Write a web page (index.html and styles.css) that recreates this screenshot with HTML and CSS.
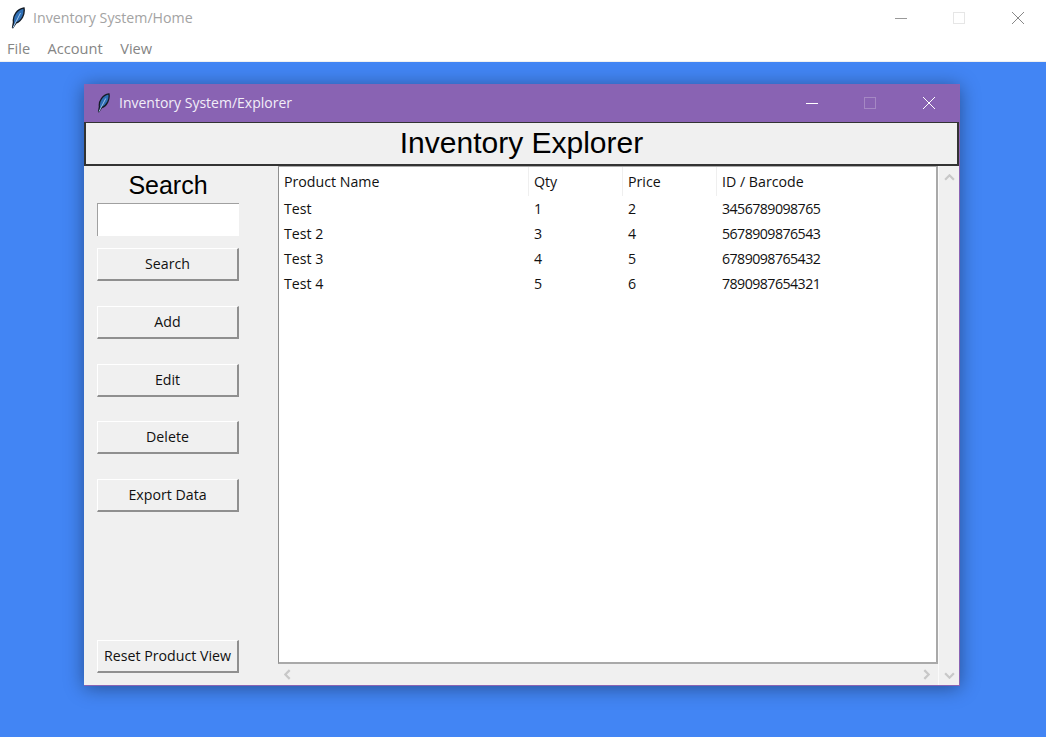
FILE: index.html
```html
<!DOCTYPE html>
<html lang="en">
<head>
  <meta charset="UTF-8">
  <title>Inventory System</title>
  <link rel="stylesheet" href="styles.css">
</head>
<body>

  <!-- Main window chrome -->
  <div class="titlebar">
    <svg class="feather" viewBox="0 0 14 22"><path d="M1.5 21 L2.5 15 C1.5 9 6 2 13 1 C14 7 11 14 5 16 Z" fill="#2f6fb5" stroke="#141c26" stroke-width="1.4"/><path d="M2 20.5 L9.5 6" stroke="#a4c8ec" stroke-width="1"/></svg>
    <span class="title-text">Inventory System/Home</span>
    <div class="win-buttons grey">
      <svg viewBox="0 0 12 12"><path d="M0 6.5 H12" stroke="#999"/></svg>
      <svg viewBox="0 0 12 12"><rect x=".5" y=".5" width="11" height="11" fill="none" stroke="#e6e6e6"/></svg>
      <svg viewBox="0 0 12 12"><path d="M0 0 L12 12 M12 0 L0 12" stroke="#888"/></svg>
    </div>
  </div>
  <div class="menubar">
    <span>File</span>
    <span>Account</span>
    <span>View</span>
  </div>

  <!-- Desktop area -->
  <div class="desktop">
    <div class="window">
      <div class="win-title">
        <svg class="feather small" viewBox="0 0 14 22"><path d="M1.5 21 L2.5 15 C1.5 9 6 2 13 1 C14 7 11 14 5 16 Z" fill="#2f6fb5" stroke="#141c26" stroke-width="1.4"/><path d="M2 20.5 L9.5 6" stroke="#a4c8ec" stroke-width="1"/></svg>
        <span class="win-title-text">Inventory System/Explorer</span>
        <div class="win-buttons">
          <svg viewBox="0 0 12 12"><path d="M0 6.5 H12" stroke="#fff"/></svg>
          <svg viewBox="0 0 12 12"><rect x=".5" y=".5" width="11" height="11" fill="none" stroke="#a588c4"/></svg>
          <svg viewBox="0 0 12 12"><path d="M0 0 L12 12 M12 0 L0 12" stroke="#fff"/></svg>
        </div>
      </div>

      <h1 class="heading">Inventory Explorer</h1>

      <div class="content">
        <div class="sidebar">
          <div class="search-label">Search</div>
          <input class="search-input" type="text">
          <button class="btn first">Search</button>
          <button class="btn">Add</button>
          <button class="btn">Edit</button>
          <button class="btn">Delete</button>
          <button class="btn">Export Data</button>
          <button class="btn reset">Reset Product View</button>
        </div>

        <div class="table-area">
          <div class="table-box">
            <div class="row head">
              <div class="col name">Product Name</div>
              <div class="col qty">Qty</div>
              <div class="col price">Price</div>
              <div class="col code">ID / Barcode</div>
            </div>
            <div class="row">
              <div class="col name">Test</div>
              <div class="col qty">1</div>
              <div class="col price">2</div>
              <div class="col code num">3456789098765</div>
            </div>
            <div class="row">
              <div class="col name">Test 2</div>
              <div class="col qty">3</div>
              <div class="col price">4</div>
              <div class="col code num">5678909876543</div>
            </div>
            <div class="row">
              <div class="col name">Test 3</div>
              <div class="col qty">4</div>
              <div class="col price">5</div>
              <div class="col code num">6789098765432</div>
            </div>
            <div class="row">
              <div class="col name">Test 4</div>
              <div class="col qty">5</div>
              <div class="col price">6</div>
              <div class="col code num">7890987654321</div>
            </div>
          </div>

          <div class="vscroll">
            <svg viewBox="0 0 10 6"><path d="M1 5 L5 1 L9 5" fill="none" stroke="#c8c8c8" stroke-width="2"/></svg>
            <svg viewBox="0 0 10 6"><path d="M1 1 L5 5 L9 1" fill="none" stroke="#c8c8c8" stroke-width="2"/></svg>
          </div>
          <div class="hscroll">
            <svg viewBox="0 0 6 10"><path d="M5 1 L1 5 L5 9" fill="none" stroke="#c8c8c8" stroke-width="2"/></svg>
            <svg viewBox="0 0 6 10"><path d="M1 1 L5 5 L1 9" fill="none" stroke="#c8c8c8" stroke-width="2"/></svg>
          </div>
        </div>
      </div>
    </div>
  </div>

</body>
</html>
```

FILE: styles.css
```css
* {
  margin: 0;
  padding: 0;
  box-sizing: border-box;
}

html, body {
  height: 100%;
  overflow: hidden;
}

body {
  display: flex;
  flex-direction: column;
  font-family: 'Open Sans', 'Noto Sans', sans-serif;
  background: #fff;
}

.titlebar {
  display: flex;
  align-items: center;
  height: 38px;
  padding: 0 0 3px 11px;
  background: #fff;
}

.feather {
  width: 14px;
  height: 22px;
}

.title-text {
  margin-left: 8px;
  font-size: 14.2px;
  color: #a3a3a3;
}

.win-buttons {
  display: flex;
  margin-left: auto;
}

.win-buttons svg {
  width: 12px;
  height: 12px;
  margin: 0 23px;
}

.win-buttons svg:last-child {
  margin-left: 24px;
}

.win-buttons.grey {
  margin-right: -1px;
}

.menubar {
  display: flex;
  gap: 17.5px;
  height: 24px;
  padding-left: 7px;
  font-size: 14.6px;
  line-height: 20px;
  color: #858585;
  background: #fff;
  border-bottom: 1px solid #f0f0f0;
}

.desktop {
  flex: 1;
  padding: 22px 86px 0 84px;
  background: #4285f4;
}

.window {
  display: flex;
  flex-direction: column;
  width: 876px;
  height: 602px;
  border: 1px solid #8a63b3;
  border-top: none;
  border-left-width: 0;
  background: #f0f0f0;
  box-shadow: 0 2px 18px rgba(0, 0, 0, 0.4);
}

.win-title {
  display: flex;
  align-items: center;
  height: 38px;
  padding: 0 1px 1px 13px;
  background: #8963b3;
}

.feather.small {
  width: 13px;
  height: 20px;
}

.win-title-text {
  margin-left: 9px;
  font-size: 14px;
  color: #f2eef8;
}

.heading {
  height: 44px;
  border: 2px solid #333;
  border-top-width: 1px;
  background: #f0f0f0;
  font-family: 'Liberation Sans', sans-serif;
  font-size: 30px;
  font-weight: normal;
  line-height: 40px;
  text-align: center;
  color: #000;
}

.content {
  flex: 1;
  display: flex;
  min-height: 0;
}

.sidebar {
  display: flex;
  flex-direction: column;
  width: 194px;
  padding: 0 39px 12px 13px;
}

.search-label {
  height: 37px;
  font-family: 'Liberation Sans', sans-serif;
  font-size: 25px;
  line-height: 38px;
  text-align: center;
  color: #000;
}

.search-input {
  height: 33px;
  border: none;
  border-top: 1px solid #a0a0a0;
  border-left: 1px solid #a0a0a0;
  background: #fff;
  outline: none;
}

.btn {
  height: 33px;
  margin-top: 24.75px;
  padding-bottom: 1px;
  border: none;
  border-top: 1px solid #fff;
  border-left: 1px solid #fff;
  border-right: 2px solid #8f8f8f;
  border-bottom: 2px solid #8f8f8f;
  background: #f0f0f0;
  font-family: 'Open Sans', 'Noto Sans', sans-serif;
  font-size: 14.2px;
  color: #111;
}

.btn.first {
  margin-top: 12px;
}

.btn.reset {
  margin-top: auto;
}

.table-area {
  flex: 1;
  display: grid;
  grid-template-columns: 660px 1fr;
  grid-template-rows: 498px 1fr;
}

.table-box {
  background: #fff;
  border: 2px solid #a9a9a9;
  border-top: 1px solid #a9a9a9;
  border-left: 1px solid #8f8f8f;
  font-size: 14.2px;
  color: #111;
}

.row {
  display: flex;
  height: 25px;
  line-height: 25px;
}

.row.head {
  height: 29px;
  line-height: 30px;
}

.row.head .col + .col {
  box-shadow: inset 1px 0 0 #efefef;
}

.col {
  padding-left: 6px;
}

.col.name {
  width: 249px;
  padding-left: 5px;
}

.col.qty, .col.price {
  width: 94px;
}

.col.num {
  letter-spacing: -0.55px;
}

.vscroll {
  grid-row: 1 / 3;
  grid-column: 2;
  display: flex;
  flex-direction: column;
  justify-content: space-between;
  align-items: center;
  padding: 8px 0 6px;
  border-left: 1px solid #fafafa;
}

.vscroll svg {
  width: 11px;
  height: 7px;
}

.hscroll {
  display: flex;
  justify-content: space-between;
  align-items: center;
  padding: 0 8px 0 6px;
}

.hscroll svg {
  width: 7px;
  height: 11px;
}
```
